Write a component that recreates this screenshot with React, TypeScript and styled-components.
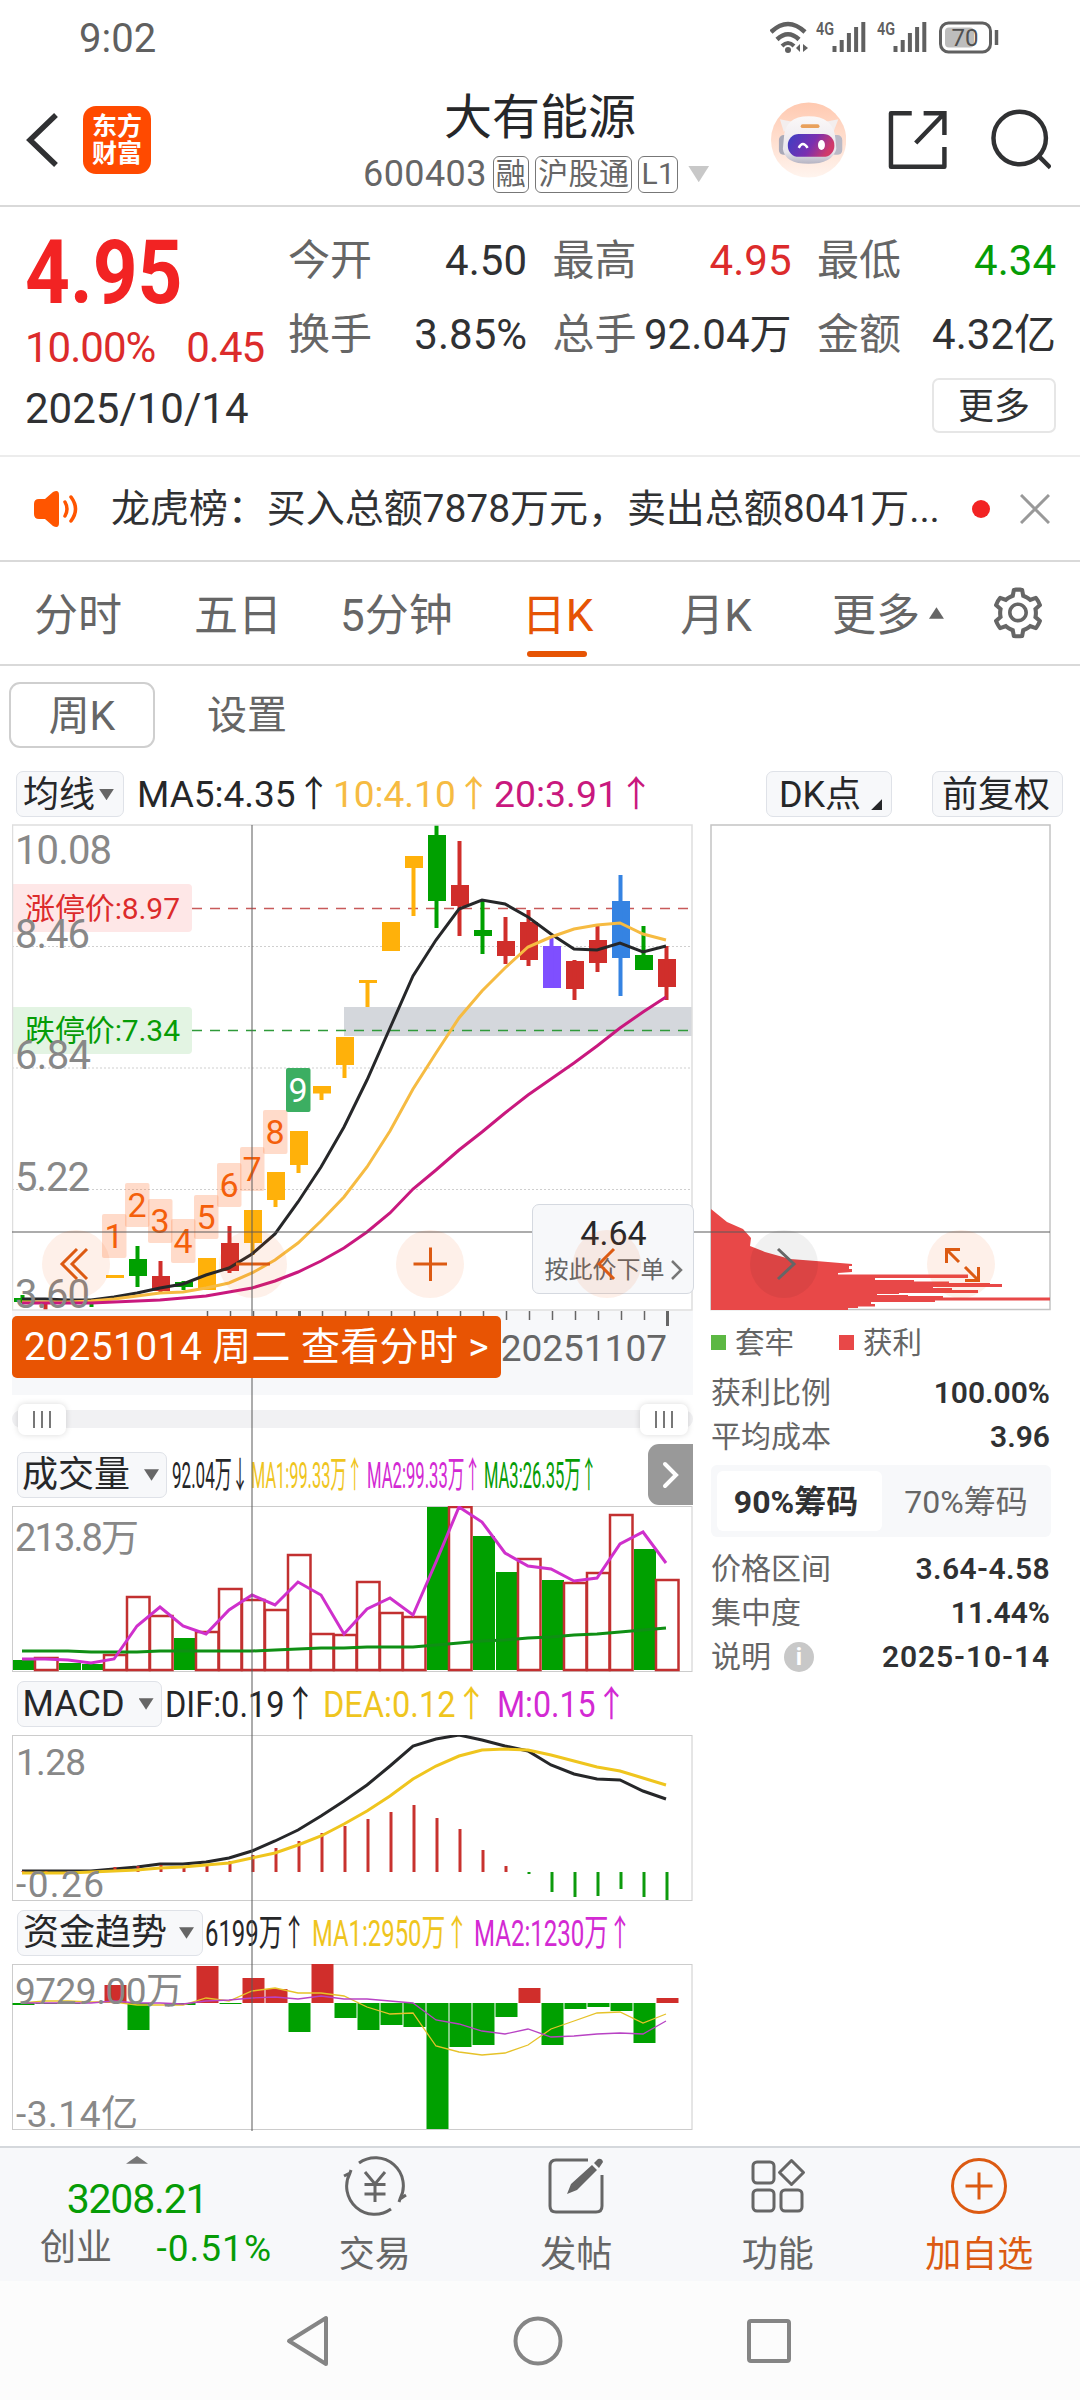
import React from 'react'
import styled, { createGlobalStyle } from 'styled-components';
import { AiOutlineSetting } from 'react-icons/ai';

const colors = {
    text: '#303133',
    dark: '#262729',
    grey: '#666666',
    axis: '#888888',
    red: '#dc2b2b',
    green: '#069c06',
    brand: '#e65404',
    gold: '#f6bb42',
    yellow: '#efc51e',
    pink: '#d32ad3',
    magenta: '#c9187e',
    panel: '#f7f8fa',
    line: '#cccccc',
}
const candleColors: Record<string, string> = {
    r: '#d02e2b',
    g: '#00a000',
    o: '#ffb10a',
    p: '#7f4fff',
    b: '#3583e2',
}
const fontStack = 'Roboto, "Noto Sans CJK SC", sans-serif';

const GlobalStyle = createGlobalStyle`
    * {
        box-sizing: border-box;
    }
    body {
        margin: 0;
        background: white;
        font-family: ${fontStack};
        color: ${colors.text};
        line-height: 1;
    }
    svg {
        display: block;
    }
    svg text {
        font-family: ${fontStack};
    }
`

// Every panel shares the same 23px candle step
const STEP = 23;
const centerX = (i: number) => 22 + STEP * i;

function linePoints(values: number[]) {
    return values.map((y, i) => `${centerX(i)},${y}`).join(' ');
}

// [color, body top, body bottom, wick top, wick bottom]
type Candle = [string, number, number, number, number];
const candles: Candle[] = [
    ['g', 1298, 1302, 1295, 1303], ['r', 1302, 1304, 1302, 1310],
    ['g', 1301, 1303, 1301, 1303], ['g', 1302, 1304, 1302, 1307],
    ['o', 1275, 1278, 1275, 1278], ['g', 1259, 1276, 1246, 1287],
    ['r', 1276, 1291, 1261, 1292], ['g', 1282, 1287, 1281, 1290],
    ['o', 1258, 1290, 1258, 1290], ['r', 1243, 1271, 1226, 1273],
    ['o', 1210, 1243, 1210, 1255], ['o', 1172, 1200, 1172, 1207],
    ['o', 1131, 1165, 1131, 1173], ['o', 1086, 1093.5, 1086, 1100],
    ['o', 1037, 1065, 1037, 1078], ['o', 980, 983, 980, 1007],
    ['o', 922, 951, 922, 951], ['o', 856, 868, 856, 916],
    ['g', 835, 901, 825, 928], ['r', 885, 906, 841, 936],
    ['g', 930, 936, 901, 954], ['r', 941, 956, 917, 964],
    ['r', 922, 960, 910, 966], ['p', 946, 988, 938, 988],
    ['r', 961, 989, 960, 1000], ['r', 940, 963, 926, 972],
    ['b', 901, 958, 875, 996], ['g', 955, 970, 926, 970],
    ['r', 959, 987, 946, 1000],
];
const ma5 = [1299, 1299, 1300, 1300, 1297, 1293, 1288, 1284, 1275, 1268, 1254, 1234, 1202, 1167, 1127, 1080, 1028, 976, 940, 909, 900, 904, 917, 934, 949, 950, 943, 952, 946];
const ma10 = [1302, 1302, 1302, 1301, 1299, 1296, 1293, 1292, 1288, 1283, 1273, 1260, 1243, 1221, 1197, 1167, 1131, 1089, 1053, 1018, 991, 968, 947, 937, 929, 925, 923, 934, 940];
const ma20 = [1303, 1303, 1303, 1303, 1302, 1301, 1300, 1298, 1296, 1292, 1288, 1281, 1272, 1261, 1248, 1232, 1213, 1189, 1170, 1150, 1132, 1113, 1095, 1079, 1063, 1046, 1028, 1012, 997];
const marks: [number, number][] = [[4, 1214], [5, 1183], [6, 1199], [7, 1219], [8, 1195], [9, 1163], [10, 1147], [11, 1110], [12, 1068]];

const volumes: [string, number][] = [
    ['g', 1660], ['r', 1658], ['g', 1663], ['g', 1664], ['r', 1655], ['r', 1597], ['r', 1616], ['g', 1638],
    ['r', 1632], ['r', 1589], ['r', 1600], ['r', 1610], ['r', 1555], ['r', 1634], ['r', 1635], ['r', 1582],
    ['r', 1613], ['r', 1617], ['g', 1507], ['r', 1507], ['g', 1536], ['g', 1572], ['r', 1559], ['g', 1580],
    ['r', 1583], ['r', 1573], ['r', 1515], ['g', 1549], ['r', 1580],
];
const volumeShort = [1659, 1659, 1660, 1663, 1659, 1626, 1607, 1626, 1634, 1610, 1595, 1605, 1582, 1595, 1634, 1609, 1598, 1615, 1562, 1507, 1522, 1553, 1566, 1569, 1581, 1578, 1544, 1532, 1563];
const volumeLong = [1651, 1651, 1651, 1652, 1652, 1652, 1651, 1651, 1651, 1651, 1651, 1650, 1649, 1648, 1648, 1647, 1647, 1647, 1645, 1643, 1641, 1640, 1638, 1637, 1635, 1634, 1632, 1630, 1628];

const macdBars = [1871, 1871, 1871, 1871, 1867, 1866, 1865, 1868, 1864, 1861, 1855, 1848, 1841, 1833, 1826, 1819, 1812, 1805, 1818, 1829, 1850, 1866, 1874, 1892, 1897, 1896, 1889, 1897, 1900];
const dif = [1871, 1871, 1871, 1871, 1869, 1867, 1864, 1864, 1862, 1858, 1851, 1841, 1830, 1816, 1801, 1785, 1766, 1746, 1739, 1735, 1740, 1746, 1751, 1765, 1774, 1779, 1780, 1791, 1799];
const dea = [1873, 1873, 1873, 1872, 1871, 1870, 1868, 1867, 1865, 1863, 1858, 1853, 1845, 1836, 1824, 1811, 1796, 1779, 1766, 1756, 1750, 1749, 1750, 1755, 1761, 1767, 1771, 1778, 1785];

const fundBars = [2005, 2004, 2004, 2003, 1985, 2030, 2003, 2005, 1966, 2004, 1978, 1989, 2032, 1964, 2018, 2030, 2025, 2027, 2129, 2047, 2045, 2017, 1988, 2045, 2009, 2007, 2011, 2043, 1998];
const fundFast = [2003, 2001, 2001, 2002, 2002, 2005, 2005, 2005, 1998, 2001, 1991, 1988, 1993, 1993, 1996, 2007, 2014, 2013, 2046, 2052, 2055, 2053, 2045, 2029, 2021, 2013, 2012, 2023, 2014];
const fundSlow = [2003, 2003, 2003, 2003, 2001, 2003, 2003, 2004, 2001, 2000, 1998, 1997, 1999, 1996, 1999, 1999, 2001, 2003, 2020, 2024, 2031, 2034, 2029, 2037, 2036, 2034, 2033, 2034, 2021];

const App: React.FC = () => {
    return (
        <Page>
            <GlobalStyle />
            <StatusBar />
            <Header />
            <Quote />
            <News>
                <SpeakerIcon />
                <NewsText>龙虎榜：买入总额7878万元，卖出总额8041万...</NewsText>
                <NewsDot />
                <svg width="30" height="30" viewBox="0 0 30 30" stroke="#999" strokeWidth="3">
                    <path d="M1 1 L29 29 M29 1 L1 29" />
                </svg>
            </News>
            <Tabs>
                <Tab $left={34}>分时</Tab>
                <Tab $left={72}>五日</Tab>
                <Tab $left={58}>5分钟</Tab>
                <Tab $left={69} $active>日K</Tab>
                <Tab $left={87}>月K</Tab>
                <Tab $left={80}>更多</Tab>
                <Triangle $size={15} $up $color={colors.grey} $left={9} />
                <GearIcon />
            </Tabs>
            <SubTabs>
                <SubTabButton>周K</SubTabButton>
                <SubTabText>设置</SubTabText>
            </SubTabs>
            <MaRow>
                <Pill $width={108}>均线<Triangle $size={15} $color={colors.grey} $left={4} /></Pill>
                <Legend $width={196} $left={13} $scale={1} $color={colors.dark}>MA5:4.35<Arrow /></Legend>
                <Legend $width={161} $left={0} $scale={1} $color={colors.gold}>10:4.10<Arrow /></Legend>
                <Legend $width={160} $left={0} $scale={1.01} $color={colors.magenta}>20:3.91<Arrow /></Legend>
                <MaActions>
                    <Pill $width={126}>DK点<Corner /></Pill>
                    <Pill $width={131}>前复权</Pill>
                </MaActions>
            </MaRow>
            <Charts>
                <ChartColumn>
                    <CandleChart />
                    <Axis>
                        <AxisTicks />
                        <AxisDate>20251107</AxisDate>
                        <DayBanner>20251014 周二 查看分时 &gt;</DayBanner>
                    </Axis>
                    <Slider>
                        <SliderHandle><i /><i /><i /></SliderHandle>
                        <SliderHandle><i /><i /><i /></SliderHandle>
                    </Slider>
                    <PanelTitle>
                        <Pill $width={150}>成交量<Triangle $size={15} $color={colors.grey} $left={14} /></Pill>
                        <Legend $width={79} $left={5} $scale={0.46} $color={colors.dark}>92.04万<Arrow down /></Legend>
                        <Legend $width={116} $left={0} $scale={0.442} $color={colors.yellow}>MA1:99.33万<Arrow /></Legend>
                        <Legend $width={117} $left={0} $scale={0.45} $color={colors.pink}>MA2:99.33万<Arrow /></Legend>
                        <Legend $width={110} $left={0} $scale={0.447} $color={colors.green}>MA3:26.35万<Arrow /></Legend>
                        <Expander>
                            <svg width="18" height="28" viewBox="0 0 18 28" fill="none" stroke="white" strokeWidth="4" strokeLinecap="round">
                                <path d="M3 3 L14 14 L3 25" />
                            </svg>
                        </Expander>
                    </PanelTitle>
                    <VolumeChart />
                    <PanelTitle>
                        <Pill $width={145}>MACD<Triangle $size={15} $color={colors.grey} $left={14} /></Pill>
                        <Legend $width={159} $left={3} $scale={0.88} $color={colors.dark}>DIF:0.19<Arrow /></Legend>
                        <Legend $width={174} $left={-1} $scale={0.88} $color={colors.yellow}>DEA:0.12<Arrow /></Legend>
                        <Legend $width={120} $left={0} $scale={0.87} $color={colors.pink}>M:0.15<Arrow /></Legend>
                    </PanelTitle>
                    <MacdChart />
                    <PanelTitle>
                        <Pill $width={186}>资金趋势<Triangle $size={15} $color={colors.grey} $left={12} /></Pill>
                        <Legend $width={107} $left={2} $scale={0.645} $color={colors.dark}>6199万<Arrow /></Legend>
                        <Legend $width={162} $left={0} $scale={0.645} $color={colors.yellow}>MA1:2950万<Arrow /></Legend>
                        <Legend $width={150} $left={0} $scale={0.65} $color={colors.pink}>MA2:1230万<Arrow /></Legend>
                    </PanelTitle>
                    <FundChart />
                </ChartColumn>
                <ChipColumn>
                    <ChipChart />
                    <ChipPanel />
                </ChipColumn>
                <CrossVertical />
                <CrossHorizontal />
                <OrderBox>
                    <strong>4.64</strong>
                    <span>按此价下单
                        <svg width="12" height="22" viewBox="0 0 12 22" fill="none" stroke="#777" strokeWidth="2.5">
                            <path d="M1 2 L10 11 L1 20" />
                        </svg>
                    </span>
                </OrderBox>
                <RoundButton $left={42}><path d="M35 19 L20 34 L35 49 M45 19 L30 34 L45 49" /></RoundButton>
                <RoundButton $left={219}><path d="M17 34 H51" /></RoundButton>
                <RoundButton $left={396}><path d="M17.5 34 H51 M34.5 17.5 V51" /></RoundButton>
                <RoundButton $left={573}><path d="M41 19 L26 34 L41 49" /></RoundButton>
                <RoundButton $left={750} $grey><path d="M28 19 L44 34 L28 49" /></RoundButton>
                <RoundButton $left={927}>
                    <path d="M33 19.5 H19.5 V33 M20 20 L32 32 M51.5 37 V50.5 H38 M51 50 L38 37" />
                </RoundButton>
            </Charts>
            <BottomBar />
            <SystemNav>
                <svg width="44" height="52" viewBox="0 0 44 52" fill="none" stroke="#858585" strokeWidth="4" strokeLinejoin="round">
                    <path d="M40 3 V49 L3 26 Z" />
                </svg>
                <svg width="50" height="50" viewBox="0 0 50 50" fill="none" stroke="#858585" strokeWidth="4">
                    <circle cx="25" cy="25" r="22.5" />
                </svg>
                <svg width="46" height="46" viewBox="0 0 46 46" fill="none" stroke="#858585" strokeWidth="4">
                    <rect x="3" y="3" width="40" height="40" rx="2" />
                </svg>
            </SystemNav>
        </Page>
    );
}
export default App

function StatusBar() {
    return (
        <StatusRow>
            <Clock>9:02</Clock>
            <svg width="230" height="36" viewBox="770 18 230 36" fill="none" stroke="#606060">
                <path d="M771 31 Q788 15 805 31" strokeWidth="4.500" />
                <path d="M777 38.500 Q788 28 799 38.500" strokeWidth="4.500" />
                <path d="M782 45 Q788 39 794 45" strokeWidth="4" />
                <circle cx="788" cy="49" r="3" fill="#606060" stroke="none" />
                <path d="M800 43 V51 L796 47 Z M803 43 V51 L808 47 Z" fill="#606060" stroke="none" />
                {[816, 877].map(x => (
                    <g key={x}>
                        <text x={x} y="34" fontSize="19" fontWeight="600" textLength="18" lengthAdjust="spacingAndGlyphs" fill="#606060" stroke="none">4G</text>
                        {[6, 12, 19, 25, 30].map((h, i) => (
                            <path key={h} d={`M${x + 18.5 + i * 7.2} 51 V${51 - h}`} strokeWidth="4" />
                        ))}
                    </g>
                ))}
                <rect x="940.500" y="22" width="50" height="29" rx="8" strokeWidth="3" />
                <rect x="945" y="26.500" width="29" height="20" rx="4" fill="#bdbdbd" stroke="none" />
                <path d="M996.500 29 V44" strokeWidth="3.500" />
                <text x="965" y="45" fontSize="24" textAnchor="middle" fill="#505050" stroke="none">70</text>
            </svg>
        </StatusRow>
    );
}

function Header() {
    return (
        <HeaderRow>
            <svg width="34" height="56" viewBox="0 0 34 56" fill="none" stroke="#303133" strokeWidth="5.500">
                <path d="M30 3 L4 28 L30 53" />
            </svg>
            <Logo>东方<br />财富</Logo>
            <TitleBlock>
                <Title>大有能源</Title>
                <CodeRow>
                    600403
                    <Tag>融</Tag>
                    <Tag>沪股通</Tag>
                    <Tag>L1</Tag>
                    <Triangle $size={21} $color="#c8c8c8" $left={10} />
                </CodeRow>
            </TitleBlock>
            <HeaderIcons>
                <RobotIcon />
                <svg width="62" height="62" viewBox="0 0 62 62" fill="none" stroke="#303133" strokeWidth="4.500">
                    <path d="M25 4 H4 V58 H58 V38" strokeLinejoin="round" />
                    <path d="M37 4 H58 V26 M57 5 L29 34" />
                </svg>
                <svg width="62" height="62" viewBox="0 0 62 62" fill="none" stroke="#303133" strokeWidth="4.500">
                    <circle cx="30" cy="29" r="26.500" />
                    <path d="M49 47 L61 59" />
                </svg>
            </HeaderIcons>
        </HeaderRow>
    );
}

function RobotIcon() {
    return (
        <svg width="76" height="76" viewBox="0 0 76 76">
            <defs>
                <linearGradient id="halo" x1="0" y1="0" x2="0" y2="1">
                    <stop offset="0" stopColor="#ffc9b0" />
                    <stop offset="1" stopColor="#fff4ee" />
                </linearGradient>
                <linearGradient id="head" x1="0" y1="0" x2="0" y2="1">
                    <stop offset="0" stopColor="#fbf8f8" />
                    <stop offset="0.75" stopColor="#e8e6ec" />
                    <stop offset="1" stopColor="#b5b3c2" />
                </linearGradient>
                <linearGradient id="visor" x1="0" y1="0" x2="1" y2="0.3">
                    <stop offset="0" stopColor="#3b3fc4" />
                    <stop offset="0.6" stopColor="#7a2fb0" />
                    <stop offset="1" stopColor="#d03a6a" />
                </linearGradient>
            </defs>
            <circle cx="38" cy="38" r="38" fill="url(#halo)" />
            <rect x="8" y="33" width="12" height="20" rx="5" fill="#a9a9b8" />
            <rect x="60" y="33" width="12" height="20" rx="5" fill="#b9b9c6" />
            <path d="M13 30 L9 17 L24 20 Z M63 30 L68 17 L53 20 Z" fill="#f3eeee" />
            <path d="M13 36 Q14 14 38 14 Q63 14 65 36 L66 47 Q62 62 38 62 Q14 62 12 47 Z" fill="url(#head)" />
            <rect x="30" y="22" width="19" height="4" rx="2" fill="#e9a15c" />
            <rect x="17" y="32" width="47" height="23" rx="11" fill="url(#visor)" />
            <path d="M28 46 Q32 38 37 46" fill="none" stroke="white" strokeWidth="2.500" />
            <ellipse cx="51" cy="43" rx="3.500" ry="5" fill="white" />
        </svg>
    );
}

function Quote() {
    return (
        <QuoteSection>
            <QuoteTop>
                <PriceBlock>
                    <Price>4.95</Price>
                    <Change><span>10.00%</span><span>0.45</span></Change>
                </PriceBlock>
                <Stats>
                    <Stat><label>今开</label><b>4.50</b></Stat>
                    <Stat $color={colors.red}><label>最高</label><b>4.95</b></Stat>
                    <Stat $color={colors.green}><label>最低</label><b>4.34</b></Stat>
                    <Stat><label>换手</label><b>3.85%</b></Stat>
                    <Stat><label>总手</label><b>92.04万</b></Stat>
                    <Stat><label>金额</label><b>4.32亿</b></Stat>
                </Stats>
            </QuoteTop>
            <QuoteBottom>
                <span>2025/10/14</span>
                <MoreButton>更多</MoreButton>
            </QuoteBottom>
        </QuoteSection>
    );
}

function SpeakerIcon() {
    return (
        <svg width="46" height="36" viewBox="0 0 46 36" fill="none" stroke="#ff5500" strokeWidth="3.500" strokeLinecap="round">
            <path d="M6 8 H12 L20 1 Q26 -2 26 4 V32 Q26 38 20 35 L12 28 H6 Q1 28 1 23 V13 Q1 8 6 8 Z" fill="#ff5500" stroke="none" />
            <path d="M32 11 Q36 18 32 25 M38 6 Q47 18 38 30" />
        </svg>
    );
}

function Arrow(props: { down?: boolean }) {
    return <ArrowGlyph>{props.down ? '↓' : '↑'}</ArrowGlyph>
}

function CandleChart() {
    return (
        <svg width="681" height="487" viewBox="12 824 681 487">
            <path d="M12 946.500 H692 M12 1068 H692 M12 1189.500 H692" stroke="#cfcfcf" strokeDasharray="2 2" />
            <rect x="344" y="1007" width="348" height="29" fill="#d4d7dc" />
            <path d="M192 908.500 H690" stroke="#c85a5a" strokeWidth="1.500" strokeDasharray="10 8" />
            <path d="M192 1030.500 H690" stroke="#2f9a3a" strokeWidth="1.500" strokeDasharray="10 8" />
            {candles.map(([color, top, bottom, high, low], i) => (
                <g key={i} fill={candleColors[color]}>
                    <rect x={14 + STEP * i} y={top} width="18" height={bottom - top} />
                    <rect x={20.500 + STEP * i} y={high} width="4" height={low - high} />
                </g>
            ))}
            <g fill="none" strokeWidth="3">
                <polyline points={linePoints(ma5)} stroke="#262729" />
                <polyline points={linePoints(ma10)} stroke={colors.gold} />
                <polyline points={linePoints(ma20)} stroke={colors.magenta} />
            </g>
            {marks.map(([i, y], n) => (
                <g key={i}>
                    <rect x={10 + STEP * i} y={y} width="24.500" height="44" rx="2" fill={n === 8 ? '#3cae62' : 'rgba(255, 125, 65, 0.28)'} />
                    <text x={22 + STEP * i} y={y + 34} fontSize="34" textAnchor="middle" fill={n === 8 ? 'white' : '#f45f0b'}>{n + 1}</text>
                </g>
            ))}
            <path d="M12 884 H188 Q192 884 192 888 V928 Q192 932 188 932 H12 Z" fill="#fee7e7" />
            <path d="M12 1007 H188 Q192 1007 192 1011 V1050 Q192 1054 188 1054 H12 Z" fill="#e3f4e3" />
            <text x="25" y="919" fontSize="30" textLength="155" fill="#dc2b2b">涨停价:8.97</text>
            <text x="25" y="1041" fontSize="30" textLength="155" fill={colors.green}>跌停价:7.34</text>
            <g fontSize="40" fill={colors.axis}>
                <text x="15" y="864" textLength="97">10.08</text>
                <text x="15" y="948" textLength="75">8.46</text>
                <text x="15" y="1069" textLength="76">6.84</text>
                <text x="15" y="1191" textLength="75">5.22</text>
                <text x="15" y="1308" textLength="75">3.60</text>
            </g>
            <rect x="12.500" y="825" width="679.500" height="485" fill="none" stroke="#dedede" strokeWidth="1.500" />
        </svg>
    );
}

function AxisTicks() {
    return (
        <svg width="681" height="16" viewBox="12 1311 681 16" stroke="#666">
            {Array.from({ length: 20 }, (_, n) => (
                <path key={n} d={`M${207.500 + STEP * n} 1311 V1320`} strokeWidth="1.500" />
            ))}
            <path d="M299.500 1311 V1320" strokeWidth="3" />
            <path d="M667.500 1311 V1326" strokeWidth="3" />
        </svg>
    );
}

function VolumeChart() {
    return (
        <svg width="681" height="166" viewBox="12 1506 681 166">
            <rect x="12.500" y="1506.500" width="679.500" height="165" fill="none" stroke={colors.line} />
            {volumes.map(([color, top], i) => color === 'g'
                ? <rect key={i} x={13 + STEP * i} y={top} width="22" height={1670 - top} fill="#00a000" />
                : <rect key={i} x={12 + STEP * i} y={top} width="22.500" height={1670 - top} fill="white" stroke="#c23030" strokeWidth="2.500" />
            )}
            <g fill="none" strokeWidth="3">
                <polyline points={linePoints(volumeLong)} stroke="#0f8f14" />
                <polyline points={linePoints(volumeShort)} stroke="#cf30cc" />
            </g>
            <text x="15" y="1551" fontSize="38" textLength="124" fill={colors.axis}>213.8万</text>
        </svg>
    );
}

function MacdChart() {
    return (
        <svg width="681" height="166" viewBox="12 1735 681 166">
            <rect x="12.500" y="1735.500" width="679.500" height="165" fill="none" stroke={colors.line} />
            <g fill="none" strokeWidth="3">
                <polyline points={linePoints(dif)} stroke="#262729" />
                {macdBars.map((y, i) => (
                    <path key={i} d={`M${23 + STEP * i} 1872 V${y}`} stroke={y < 1872 ? '#c8322f' : '#0d9a0d'} />
                ))}
                <polyline points={linePoints(dea)} stroke={colors.yellow} />
            </g>
            <g fontSize="37" fill={colors.axis}>
                <text x="16" y="1775" textLength="70">1.28</text>
                <text x="16" y="1897" textLength="88">-0.26</text>
            </g>
        </svg>
    );
}

function FundChart() {
    return (
        <svg width="681" height="166" viewBox="12 1964 681 166">
            <rect x="12.500" y="1964.500" width="679.500" height="165" fill="none" stroke={colors.line} />
            {fundBars.map((y, i) => (
                <rect key={i} x={12.500 + STEP * i} y={Math.min(y, 2003)} width="22" height={Math.abs(y - 2003)} fill={y < 2003 ? '#d02e2b' : '#00a000'} />
            ))}
            <g fill="none" strokeWidth="1.300">
                <polyline points={linePoints(fundFast)} stroke="#e6c229" />
                <polyline points={linePoints(fundSlow)} stroke="#b843c4" />
            </g>
            <g fontSize="37" fill={colors.axis}>
                <text x="15" y="2004" textLength="168">9729.00万</text>
                <text x="16" y="2127" textLength="122">-3.14亿</text>
            </g>
        </svg>
    );
}

function ChipChart() {
    return (
        <svg width="341" height="487" viewBox="710 824 341 487">
            <rect x="711" y="825" width="339" height="484.500" fill="none" stroke="#c4c4c4" strokeWidth="1.500" />
            <path
                d="M711 1209 L727 1222 L743 1229 L751 1238 L750 1246 L765 1252 L790 1259 L816 1261 L852 1264 V1266 H849 V1269 H852 V1272 L838 1273 V1274.500
                H968 V1278 H875 V1280 H914 V1281.500 H949 V1283 H990 V1284 H1002 V1287 H933 V1288 H952 V1290 H978 V1293 H899 V1294
                H877 V1295 H908 V1296 H943 V1297.500 H1050 V1300.500 H935 V1302 H871 V1304 H875 V1306.500 H858 V1308 H848 V1310 H711 Z"
                fill="#e84848"
            />
        </svg>
    );
}

function ChipPanel() {
    return (
        <>
            <ChipLegend>
                <ChipKey $color="#5cb843">套牢</ChipKey>
                <ChipKey $color="#e84848">获利</ChipKey>
            </ChipLegend>
            <ChipRow><span>获利比例</span><b>100.00%</b></ChipRow>
            <ChipRow><span>平均成本</span><b>3.96</b></ChipRow>
            <ChipToggle>
                <ChipOption $active>90%筹码</ChipOption>
                <ChipOption>70%筹码</ChipOption>
            </ChipToggle>
            <ChipRow $spacing={0.4}><span>价格区间</span><b>3.64-4.58</b></ChipRow>
            <ChipRow><span>集中度</span><b>11.44%</b></ChipRow>
            <ChipRow $spacing={0.9}><span>说明<InfoDot>i</InfoDot></span><b>2025-10-14</b></ChipRow>
        </>
    );
}

function RoundButton(props: { $left: number, $grey?: boolean, children: React.ReactNode }) {
    return (
        <RoundButtonBase $left={props.$left} $grey={props.$grey}>
            <svg width="68" height="68" viewBox="0 0 68 68" fill="none" stroke={props.$grey ? '#666' : '#dc5a12'} strokeWidth="3">
                {props.children}
            </svg>
        </RoundButtonBase>
    );
}

function BottomBar() {
    return (
        <BottomRow>
            <IndexBlock>
                <Triangle $size={22} $up $short $color="#777" $left={0} />
                <strong>3208.21</strong>
                <div><span>创业</span><em>-0.51%</em></div>
            </IndexBlock>
            <BottomItem>
                <svg width="66" height="60" viewBox="0 0 66 60" fill="none" stroke="#666" strokeWidth="3">
                    <path d="M17 7 A28 28 0 0 1 58 43 L57 46 M58 43 L64 39 M49 53 A28 28 0 0 1 8 17 L9 14 M8 17 L2 20" />
                    <path d="M23 16 L33 28 L43 16 M33 28 V46 M22.500 28.500 H43.500 M22.500 38 H43.500" />
                </svg>
                交易
            </BottomItem>
            <BottomItem>
                <svg width="60" height="60" viewBox="0 0 60 60" fill="none" stroke="#666" strokeWidth="3">
                    <path d="M42 4 H10 Q4 4 4 10 V50 Q4 56 10 56 H50 Q56 56 56 50 V19" />
                    <path d="M21 38 L25 28 L46 9 L51 14 L31 34 Z M48 7 L52 3 Q56 2 57 6 L53 12 Z" fill="#666" stroke="none" />
                </svg>
                发帖
            </BottomItem>
            <BottomItem>
                <svg width="60" height="60" viewBox="0 0 60 60" fill="none" stroke="#666" strokeWidth="3">
                    <rect x="5" y="6" width="21" height="21" rx="4" />
                    <rect x="5" y="34" width="21" height="21" rx="4" />
                    <rect x="33" y="34" width="21" height="21" rx="4" />
                    <path d="M43.500 4.500 L55.500 16.500 L43.500 28.500 L31.500 16.500 Z" strokeLinejoin="round" />
                </svg>
                功能
            </BottomItem>
            <BottomItem $active>
                <svg width="60" height="60" viewBox="0 0 60 60" fill="none" stroke="#dc5a12" strokeWidth="3">
                    <circle cx="30" cy="30" r="26.500" />
                    <path d="M30 16.500 V43.500 M16.500 30 H43.500" />
                </svg>
                加自选
            </BottomItem>
        </BottomRow>
    );
}

const Page = styled.div`
    width: 1080px;
    height: 2400px;
    display: flex;
    flex-direction: column;
    background: white;
    overflow: hidden;
`
const StatusRow = styled.div`
    height: 74px;
    padding: 0 80px 0 79px;
    display: flex;
    justify-content: space-between;
    align-items: center;
`
const Clock = styled.span`
    padding-top: 3px;
    font-size: 40px;
    color: #606060;
`
const HeaderRow = styled.header`
    height: 133px;
    padding: 0 28px 0 26px;
    display: grid;
    grid-template-columns: 57px 68px 1fr 281px;
    align-items: center;
    border-bottom: 2px solid #d9d9d9;
`
const Logo = styled.div`
    height: 68px;
    padding: 7px 0 0 9px;
    border-radius: 13px;
    background: #ff4a00;
    color: white;
    font-size: 25px;
    font-weight: 700;
    line-height: 27px;
`
const TitleBlock = styled.div`
    height: 100%;
    padding: 20px 0 0 212px;
`
const Title = styled.h1`
    margin: 0;
    padding-left: 81px;
    font-size: 48px;
    font-weight: 400;
    line-height: 48px;
    color: ${colors.dark};
    white-space: nowrap;
`
const CodeRow = styled.div`
    margin-top: 12px;
    height: 40px;
    display: flex;
    align-items: center;
    font-size: 36px;
    letter-spacing: 0.4px;
    color: ${colors.grey};
    white-space: nowrap;
`
const Tag = styled.span`
    height: 37px;
    margin-left: 6px;
    padding: 0 2px;
    display: flex;
    align-items: center;
    border: 1.5px solid #777;
    border-radius: 6px;
    font-size: 30px;
`
const HeaderIcons = styled.div`
    padding-right: 1px;
    display: flex;
    justify-content: flex-end;
    align-items: center;
    gap: 41px;
`
const Triangle = styled.i<{ $size: number, $color: string, $left: number, $up?: boolean, $short?: boolean }>`
    flex: none;
    width: ${props => props.$size}px;
    height: ${props => props.$size * (props.$short ? 0.35 : 0.78)}px;
    margin-left: ${props => props.$left}px;
    background: ${props => props.$color};
    clip-path: ${props => props.$up ? 'polygon(50% 0, 100% 100%, 0 100%)' : 'polygon(0 0, 100% 0, 50% 100%)'};
`
const QuoteSection = styled.section`
    height: 250px;
    padding: 16px 24px 0 25px;
    border-bottom: 2px solid #ececec;
`
const QuoteTop = styled.div`
    height: 148px;
    display: flex;
    justify-content: space-between;
`
const PriceBlock = styled.div`
    width: 245px;
    color: #f22323;
    white-space: nowrap;
`
const Price = styled.div`
    height: 103px;
    font-size: 89px;
    font-weight: 700;
    line-height: 99px;
    transform: scaleX(0.88);
    transform-origin: left;
`
const Change = styled.div`
    padding-top: 1px;
    display: flex;
    gap: 31px;
    font-size: 42px;
    letter-spacing: -1px;
    color: ${colors.red};
`
const Stats = styled.div`
    width: 768px;
    display: grid;
    grid-template-columns: repeat(3, 239px);
    grid-template-rows: 75px 74px;
    justify-content: space-between;
`
const Stat = styled.div<{ $color?: string }>`
    display: flex;
    justify-content: space-between;
    align-items: center;
    font-size: 42px;
    white-space: nowrap;

    > label {
        color: ${colors.grey};
    }
    > b {
        font-weight: 400;
        color: ${props => props.$color || colors.text};
    }
`
const QuoteBottom = styled.div`
    height: 75px;
    display: flex;
    justify-content: space-between;
    align-items: center;
    font-size: 42px;
`
const MoreButton = styled.button`
    width: 124px;
    height: 55px;
    margin-top: -6px;
    padding: 2px 0 0;
    border: 2px solid #e6e6e6;
    border-radius: 7px;
    background: white;
    color: ${colors.text};
    font: 36px/1 ${fontStack};
`
const News = styled.div`
    height: 105px;
    padding: 0 30px 0 33px;
    display: flex;
    align-items: center;
    border-bottom: 2px solid #d9d9d9;
`
const NewsText = styled.span`
    width: 859px;
    padding: 1px 0 0 32px;
    font-size: 39px;
    letter-spacing: -0.05px;
    white-space: nowrap;
`
const NewsDot = styled.i`
    width: 18px;
    height: 18px;
    margin: 0 30px 0 34px;
    flex: none;
    border-radius: 50%;
    background: #f22323;
`
const Tabs = styled.nav`
    height: 104px;
    display: flex;
    align-items: center;
    border-bottom: 2px solid #d9d9d9;
`
const Tab = styled.span<{ $left: number, $active?: boolean }>`
    height: 100%;
    margin-left: ${props => props.$left}px;
    padding-top: 6px;
    display: flex;
    align-items: center;
    position: relative;
    font-size: 44px;
    color: ${props => props.$active ? colors.brand : colors.grey};
    white-space: nowrap;

    ${props => props.$active && `
        &::after {
            content: '';
            position: absolute;
            left: 5px;
            bottom: 7px;
            width: 60px;
            height: 6px;
            border-radius: 3px;
            background: ${colors.brand};
        }
    `}
`
const GearIcon = styled(AiOutlineSetting)`
    width: 58px;
    height: 58px;
    margin-left: 45px;
    color: ${colors.grey};
`
const SubTabs = styled.div`
    height: 97px;
    padding: 0 9px;
    display: flex;
    align-items: center;
    gap: 52px;
    color: ${colors.grey};
    font-size: 40px;
`
const SubTabButton = styled.div`
    width: 146px;
    height: 66px;
    padding-top: 3px;
    display: flex;
    align-items: center;
    justify-content: center;
    border: 2px solid #cfcfcf;
    border-radius: 11px;
    font-size: 41px;
`
const SubTabText = styled.span`
    padding-top: 3px;
`
const MaRow = styled.div`
    height: 61px;
    padding: 1px 17px 0 16px;
    display: flex;
    align-items: center;
`
const Pill = styled.div<{ $width: number }>`
    flex: none;
    width: ${props => props.$width}px;
    height: 46px;
    padding: 1px 7px 0 4px;
    display: flex;
    align-items: center;
    justify-content: center;
    border: 1.5px solid #dfe2e8;
    border-radius: 7px;
    background: ${colors.panel};
    color: ${colors.dark};
    font-size: 36px;
    white-space: nowrap;
`
const MaActions = styled.div`
    margin-left: auto;
    display: flex;
    gap: 40px;
`
const Corner = styled.i`
    width: 11px;
    height: 11px;
    margin: 20px -6px 0 10px;
    background: ${colors.dark};
    clip-path: polygon(100% 0, 100% 100%, 0 100%);
`
const Legend = styled.span<{ $width: number, $left: number, $scale: number, $color: string }>`
    flex: none;
    width: ${props => props.$width}px;
    margin-left: ${props => props.$left}px;
    padding-top: 1px;
    transform: scaleX(${props => props.$scale});
    transform-origin: left;
    font-size: 37px;
    color: ${props => props.$color};
    white-space: nowrap;
`
const ArrowGlyph = styled.span`
    font-family: "Noto Sans CJK SC", sans-serif;
    font-size: 36px;
    line-height: 30px;
`
const Charts = styled.main`
    height: 1322px;
    padding-left: 12px;
    display: flex;
    gap: 17px;
    position: relative;
`
const ChartColumn = styled.div`
    width: 681px;
`
const Axis = styled.div`
    height: 84px;
    position: relative;
    background: ${colors.panel};
`
const AxisDate = styled.div`
    padding: 3px 26px 0 0;
    text-align: right;
    font-size: 37px;
    color: ${colors.grey};
`
const DayBanner = styled.div`
    position: absolute;
    z-index: 2;
    left: 0;
    top: 5px;
    width: 489px;
    height: 62px;
    padding-left: 12px;
    border-radius: 5px;
    background: #e85403;
    color: white;
    font-size: 39px;
    line-height: 62px;
    letter-spacing: 0.35px;
    white-space: nowrap;
`
const Slider = styled.div`
    height: 18px;
    margin: 15px 0;
    padding: 0 5px 0 6px;
    display: flex;
    align-items: center;
    justify-content: space-between;
    border-radius: 9px;
    background: #f1f1f3;
`
const SliderHandle = styled.div`
    width: 48px;
    height: 31px;
    display: flex;
    align-items: center;
    justify-content: center;
    gap: 6px;
    border-radius: 7px;
    background: white;
    box-shadow: 0 0 6px rgba(0, 0, 0, 0.15);

    > i {
        width: 2px;
        height: 17px;
        background: #777;
    }
`
const PanelTitle = styled.div`
    height: 63px;
    padding-left: 5px;
    display: flex;
    align-items: center;
`
const Expander = styled.div`
    width: 45px;
    height: 61px;
    margin-left: auto;
    display: flex;
    align-items: center;
    justify-content: center;
    border-radius: 11px 0 0 11px;
    background: #999;
`
const ChipColumn = styled.aside`
    width: 341px;
`
const ChipLegend = styled.div`
    height: 58px;
    padding: 5px 0 0 1px;
    display: flex;
    align-items: center;
`
const ChipKey = styled.span<{ $color: string }>`
    width: 128px;
    display: flex;
    align-items: center;
    font-size: 29.5px;
    line-height: 32px;
    color: ${colors.grey};

    &::before {
        content: '';
        width: 15px;
        height: 15px;
        margin-right: 9px;
        background: ${props => props.$color};
    }
`
const ChipRow = styled.div<{ $spacing?: number }>`
    height: 44px;
    padding: 4px 1px 0;
    display: flex;
    align-items: center;
    justify-content: space-between;
    font-size: 30px;
    color: ${colors.grey};
    white-space: nowrap;

    > span {
        display: flex;
        align-items: center;
    }
    > b {
        font-weight: 600;
        letter-spacing: ${props => props.$spacing || 0}px;
        color: ${colors.text};
    }
`
const ChipToggle = styled.div`
    height: 72px;
    margin: 8px 0 8px 1px;
    padding: 6px;
    display: flex;
    border-radius: 6px;
    background: ${colors.panel};
`
const ChipOption = styled.div<{ $active?: boolean }>`
    flex: 1;
    padding: ${props => props.$active ? '2px 7px 0 0' : '2px 0 0 5px'};
    display: flex;
    align-items: center;
    justify-content: center;
    border-radius: 6px;
    background: ${props => props.$active ? 'white' : 'transparent'};
    color: ${props => props.$active ? colors.text : colors.grey};
    font-size: 32px;
    font-weight: ${props => props.$active ? 700 : 400};
`
const InfoDot = styled.i`
    width: 30px;
    height: 30px;
    margin-left: 13px;
    border-radius: 50%;
    background: #c8c8c8;
    color: white;
    font-size: 24px;
    font-style: normal;
    font-weight: 700;
    line-height: 30px;
    text-align: center;
`
const CrossVertical = styled.i`
    position: absolute;
    z-index: 1;
    left: 251px;
    top: 1px;
    width: 2px;
    height: 1306px;
    background: rgba(90, 90, 90, 0.5);
`
const CrossHorizontal = styled.i`
    position: absolute;
    left: 12px;
    top: 407px;
    width: 1038px;
    height: 2px;
    background: rgba(90, 90, 90, 0.5);
`
const OrderBox = styled.div`
    position: absolute;
    left: 532px;
    top: 380px;
    width: 162px;
    height: 90px;
    padding: 11px 0 0 1px;
    display: flex;
    flex-direction: column;
    align-items: center;
    border: 1.5px solid #d5d9e0;
    border-radius: 7px;
    background: ${colors.panel};

    > strong {
        font-size: 34px;
        font-weight: 400;
        color: ${colors.dark};
    }
    > span {
        margin-top: 8px;
        display: flex;
        align-items: center;
        gap: 6px;
        font-size: 24px;
        color: ${colors.grey};
        white-space: nowrap;
    }
`
const RoundButtonBase = styled.div<{ $left: number, $grey?: boolean }>`
    position: absolute;
    left: ${props => props.$left}px;
    top: 406px;
    width: 68px;
    height: 68px;
    border-radius: 50%;
    background: ${props => props.$grey ? 'rgba(0, 0, 0, 0.055)' : 'rgba(240, 90, 10, 0.09)'};
`
const BottomRow = styled.footer`
    height: 135px;
    display: flex;
    border-top: 2px solid #d5d8dc;
    background: ${colors.panel};
`
const IndexBlock = styled.div`
    width: 274px;
    padding-top: 8px;
    display: flex;
    flex-direction: column;
    align-items: center;
    color: ${colors.green};

    > strong {
        margin-top: 15px;
        font-size: 41px;
        font-weight: 400;
        letter-spacing: -1.2px;
    }
    > div {
        width: 100%;
        margin-top: 10px;
        padding: 0 2px 0 40px;
        display: flex;
        align-items: center;
        justify-content: space-between;
        font-size: 36px;
    }
    span {
        color: ${colors.grey};
    }
    em {
        font-size: 37px;
        font-style: normal;
        letter-spacing: 1px;
    }
`
const BottomItem = styled.div<{ $active?: boolean }>`
    width: 201.5px;
    padding-top: 8px;
    display: flex;
    flex-direction: column;
    align-items: center;
    gap: 21px;
    font-size: 36px;
    color: ${props => props.$active ? '#dc5a12' : colors.grey};
`
const SystemNav = styled.div`
    flex: 1;
    padding: 0 288px 0 286px;
    display: flex;
    align-items: center;
    justify-content: space-between;
    background: #fcfcfc;
`
